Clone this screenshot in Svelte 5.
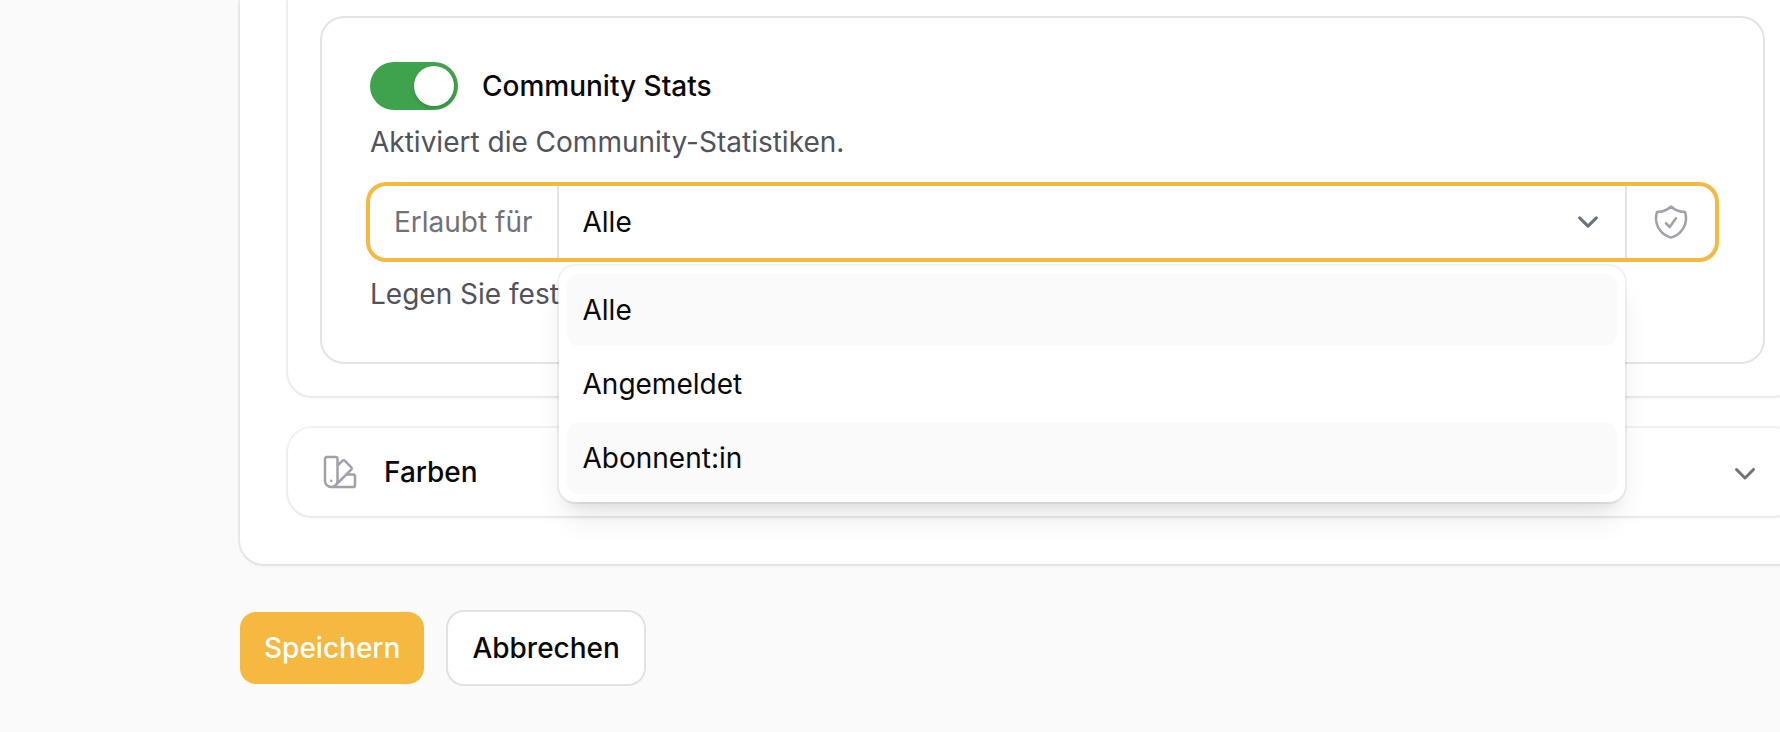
<script>
  const options = ['Alle', 'Angemeldet', 'Abonnent:in'];
  let enabled = $state(true);
  let selected = $state('Alle');
  let hovered = $state('Abonnent:in');
  let open = $state(true);

  function toggleList(event) {
    event.preventDefault();
    open = !open;
  }

  function choose(option) {
    selected = option;
    open = false;
  }
</script>

<main class="page">
  <div class="card">
    <section class="section body">
      <div class="group">
        <label class="toggle-row">
          <input class="toggle" type="checkbox" role="switch" bind:checked={enabled} />
          <span class="strong">Community Stats</span>
        </label>
        <p class="hint">Aktiviert die Community-Statistiken.</p>

        <div class="field">
          <label class="prefix" for="allowed">Erlaubt für</label>
          <div class="control">
            <select id="allowed" bind:value={selected} onmousedown={toggleList}>
              {#each options as option}
                <option value={option}>{option}</option>
              {/each}
            </select>
            <svg class="caret" viewBox="0 0 20 20" fill="none" aria-hidden="true">
              <path d="m6 8 4 4 4-4" stroke="currentColor" stroke-width="1.5" stroke-linecap="round" stroke-linejoin="round" />
            </svg>
            {#if open}
              <div class="menu">
                {#each options as option}
                  <button
                    type="button"
                    class:active={option === selected || option === hovered}
                    onmouseenter={() => (hovered = option)}
                    onclick={() => choose(option)}>{option}</button>
                {/each}
              </div>
            {/if}
          </div>
          <div class="suffix">
            <svg class="icon" viewBox="0 0 24 24" fill="none" stroke="currentColor" stroke-width="1.5" stroke-linecap="round" stroke-linejoin="round" aria-hidden="true">
              <path d="M9 12.75 11.25 15 15 9.75m-3-7.036A11.959 11.959 0 0 1 3.598 6 11.99 11.99 0 0 0 3 9.749c0 5.592 3.824 10.29 9 11.623 5.176-1.332 9-6.03 9-11.622 0-1.31-.21-2.571-.598-3.751h-.152c-3.196 0-6.1-1.248-8.25-3.285Z" />
            </svg>
          </div>
        </div>
        <p class="hint">Legen Sie fest</p>
      </div>
    </section>

    <section class="section">
      <button type="button" class="section-head">
        <svg class="icon" viewBox="0 0 24 24" fill="none" stroke="currentColor" stroke-width="1.5" stroke-linecap="round" stroke-linejoin="round" aria-hidden="true">
          <path d="M4.098 19.902a3.75 3.75 0 0 0 5.304 0l6.401-6.402M6.75 21A3.75 3.75 0 0 1 3 17.25V4.125C3 3.504 3.504 3 4.125 3h5.25c.621 0 1.125.504 1.125 1.125v4.072M6.75 21a3.75 3.75 0 0 0 3.75-3.75V8.197M6.75 21h13.125c.621 0 1.125-.504 1.125-1.125v-5.25c0-.621-.504-1.125-1.125-1.125h-4.072M10.5 8.197l2.88-2.88c.438-.439 1.15-.439 1.59 0l3.712 3.713c.44.44.44 1.152 0 1.59l-2.879 2.88M6.75 17.25h.008v.008H6.75v-.008Z" />
        </svg>
        <span class="strong">Farben</span>
        <svg class="icon chevron" viewBox="0 0 20 20" fill="currentColor" aria-hidden="true">
          <path fill-rule="evenodd" clip-rule="evenodd" d="M5.22 8.22a.75.75 0 0 1 1.06 0L10 11.94l3.72-3.72a.75.75 0 1 1 1.06 1.06l-4.25 4.25a.75.75 0 0 1-1.06 0L5.22 9.28a.75.75 0 0 1 0-1.06Z" />
        </svg>
      </button>
    </section>
  </div>

  <div class="actions">
    <button type="button" class="btn primary">Speichern</button>
    <button type="button" class="btn">Abbrechen</button>
  </div>
</main>

<style>
  :global(body) {
    background: #fafafa;
  }

  .page {
    box-sizing: border-box;
    min-height: 100vh;
    padding-left: 240px;
    overflow: hidden;
    background: #fafafa;
    color: #09090b;
    font-family: Inter, sans-serif;
    font-size: 28px;
    line-height: 40px;
  }

  button,
  select {
    margin: 0;
    border: 0;
    background: none;
    color: inherit;
    font: inherit;
    cursor: pointer;
  }

  .card {
    display: flex;
    flex-direction: column;
    gap: 32px;
    margin-right: -65px;
    padding: 0 48px 48px;
    border-radius: 0 0 24px 24px;
    background: #fff;
    box-shadow: 0 0 0 2px rgba(9, 9, 11, 0.06), 0 2px 4px rgba(0, 0, 0, 0.05);
  }

  .section {
    border-radius: 24px;
    background: #fff;
    box-shadow: 0 0 0 2px rgba(9, 9, 11, 0.05), 0 2px 4px rgba(0, 0, 0, 0.05);
  }

  .body {
    padding: 16px 32px 32px;
    border-radius: 0 0 24px 24px;
  }

  .group {
    padding: 44px 48px 48px;
    border: 2px solid #e4e4e5;
    border-radius: 24px;
  }

  .toggle-row {
    display: flex;
    align-items: center;
    gap: 24px;
    width: fit-content;
    margin-bottom: 12px;
  }

  .strong {
    font-weight: 500;
  }

  .toggle {
    appearance: none;
    box-sizing: border-box;
    width: 88px;
    height: 48px;
    margin: 0;
    padding: 4px;
    border-radius: 24px;
    background: #e4e4e7;
    cursor: pointer;
  }

  .toggle::before {
    content: '';
    display: block;
    width: 40px;
    height: 40px;
    border-radius: 50%;
    background: #fff;
    box-shadow: 0 2px 4px rgba(0, 0, 0, 0.15);
  }

  .toggle:checked {
    background: #3fa34d;
  }

  .toggle:checked::before {
    margin-left: auto;
  }

  .hint {
    margin: 0;
    color: #52525b;
  }

  .field {
    display: flex;
    height: 72px;
    margin: 24px 0 16px;
    border-radius: 16px;
    background: #fff;
    box-shadow: 0 0 0 4px #f5b841;
  }

  .prefix {
    display: flex;
    align-items: center;
    padding: 0 24px;
    border-right: 2px solid #e4e4e5;
    color: #71717a;
  }

  .control {
    position: relative;
    flex: 1;
  }

  select {
    appearance: none;
    width: 100%;
    height: 100%;
    padding: 0 72px 0 24px;
    outline: none;
  }

  .caret {
    position: absolute;
    top: 15px;
    right: 16px;
    width: 42px;
    height: 42px;
    color: #6b7280;
    pointer-events: none;
  }

  .suffix {
    display: flex;
    align-items: center;
    padding: 0 24px;
    border-left: 2px solid #e4e4e5;
    color: #a1a1aa;
  }

  .icon {
    flex: none;
    width: 40px;
    height: 40px;
  }

  .menu {
    position: absolute;
    z-index: 1;
    top: calc(100% + 8px);
    left: 0;
    right: 0;
    display: flex;
    flex-direction: column;
    gap: 2px;
    padding: 8px;
    border-radius: 16px;
    background: #fff;
    box-shadow: 0 0 0 2px rgba(9, 9, 11, 0.05), 0 20px 30px -6px rgba(0, 0, 0, 0.1),
      0 8px 12px -8px rgba(0, 0, 0, 0.1);
  }

  .menu button {
    padding: 16px;
    border-radius: 12px;
    text-align: left;
  }

  .menu .active {
    background: #fafafa;
  }

  .section-head {
    display: flex;
    align-items: center;
    gap: 24px;
    width: 100%;
    padding: 24px 32px;
    color: #a1a1aa;
    text-align: left;
  }

  .section-head .strong {
    flex: 1;
    color: #09090b;
  }

  .section-head .chevron {
    color: #71717a;
  }

  .actions {
    display: flex;
    gap: 24px;
    padding: 48px 0;
  }

  .btn {
    padding: 16px 24px;
    border-radius: 16px;
    background: #fff;
    box-shadow: 0 0 0 2px #e2e2e3;
    font-weight: 500;
  }

  .btn.primary {
    background: #f5b841;
    box-shadow: none;
    color: #fff;
  }
</style>
